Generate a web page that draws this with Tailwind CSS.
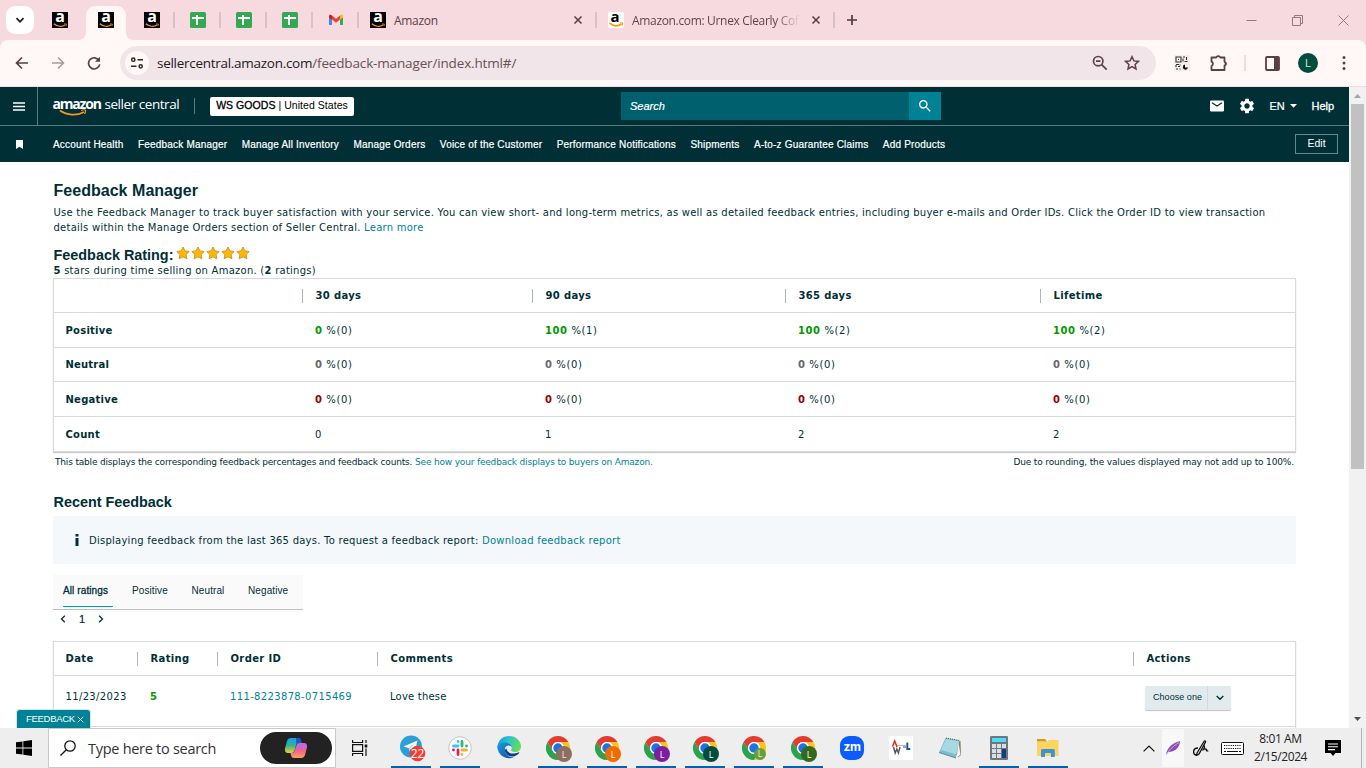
<!DOCTYPE html>
<html lang="en">
<head>
    <meta charset="UTF-8">
    <meta name="viewport" content="width=device-width, initial-scale=1.0">
    <title>Feedback Manager</title>
    <script src="https://cdn.jsdelivr.net/npm/@tailwindcss/browser@4"></script>
</head>
<body class="w-[1366px] h-[768px] overflow-hidden bg-white flex flex-col font-['Liberation_Sans',Arial,sans-serif] text-[#002f36]">

    <!-- Shared icons -->
    <svg class="hidden">
        <symbol id="fav-amazon" viewBox="0 0 16 16">
            <rect width="16" height="16" fill="#000"/>
            <text x="8" y="10.3" font-family="Open Sans, sans-serif" font-weight="700" font-size="16" fill="#fff" text-anchor="middle">a</text>
            <path d="M1.8 11.8C5 14.8 10 15 13 13" fill="none" stroke="#f7981d" stroke-width="1.2"/>
            <path d="M12 12h2.4l-.6 2.2" fill="none" stroke="#f7981d" stroke-width=".8"/>
        </symbol>
        <symbol id="fav-sheet" viewBox="0 0 16 16">
            <rect width="16" height="16" rx="1.6" fill="#34a853"/>
            <path d="M2 6h12M7 3v10" stroke="#fff" stroke-width="2" fill="none"/>
        </symbol>
        <symbol id="tab-close" viewBox="0 0 10 10">
            <path d="M1.5 1.5l7 7M8.5 1.5l-7 7" stroke="#5b4046" stroke-width="1.6"/>
        </symbol>
        <symbol id="chrome" viewBox="0 0 48 48">
            <path d="M24 12h20.8A24 24 0 0 0 3.2 12l10.4 18A12 12 0 0 1 24 12z" fill="#e33b2e"/>
            <path d="M24 12h20.8A24 24 0 0 1 24 48l10.4-18A12 12 0 0 0 24 12z" fill="#fcc31e"/>
            <path d="M3.2 12A24 24 0 0 0 24 48l10.4-18a12 12 0 0 1-20.8 0z" fill="#2ba24c"/>
            <circle cx="24" cy="24" r="12" fill="#fff"/>
            <circle cx="24" cy="24" r="9.4" fill="#1a73e8"/>
        </symbol>
        <symbol id="star" viewBox="0 0 14 14">
            <path d="M7 1l1.9 3.9 4.3.6-3.1 3 .8 4.3L7 10.8l-3.9 2 .8-4.3-3.1-3 4.3-.6z" fill="#ffb700" stroke="#d0962a" stroke-width="1" stroke-linejoin="round"/>
        </symbol>
    </svg>

    <!-- Tab strip -->
    <div class="h-10 shrink-0 bg-[#f6dadf] flex items-center text-[12px] text-[#5b4046] font-['Open_Sans','Noto_Sans',sans-serif]">
        <div class="w-[37px] pl-[6px] shrink-0">
            <div class="w-7 h-7 rounded-[9px] bg-white flex items-center justify-center">
                <svg class="w-[10px] h-[10px]" viewBox="0 0 10 10"><path d="M1.5 3.2L5 6.8l3.5-3.6" fill="none" stroke="#221a1c" stroke-width="1.8"/></svg>
            </div>
        </div>
        <div class="w-[46px] flex justify-center"><svg class="w-4 h-4"><use href="#fav-amazon"/></svg></div>
        <div class="w-[46px] h-10 relative flex items-center justify-center">
            <svg class="absolute top-0 left-[-5px] w-14 h-10" viewBox="0 0 56 40"><path d="M0 40c5 0 8-3 8-8V16c0-6 4-10 10-10h20c6 0 10 4 10 10v16c0 5 3 8 8 8z" fill="#fff8f6"/></svg>
            <svg class="w-4 h-4 relative"><use href="#fav-amazon"/></svg>
        </div>
        <div class="w-[46px] flex justify-center relative"><svg class="w-4 h-4"><use href="#fav-amazon"/></svg><i class="absolute right-0 w-[2px] h-4 bg-[#d6c1c4]"></i></div>
        <div class="w-[46px] flex justify-center relative"><svg class="w-4 h-4"><use href="#fav-sheet"/></svg><i class="absolute right-0 w-[2px] h-4 bg-[#d6c1c4]"></i></div>
        <div class="w-[46px] flex justify-center relative"><svg class="w-4 h-4"><use href="#fav-sheet"/></svg><i class="absolute right-0 w-[2px] h-4 bg-[#d6c1c4]"></i></div>
        <div class="w-[46px] flex justify-center relative"><svg class="w-4 h-4"><use href="#fav-sheet"/></svg><i class="absolute right-0 w-[2px] h-4 bg-[#d6c1c4]"></i></div>
        <div class="w-[46px] flex justify-center relative">
            <svg class="w-4 h-4" viewBox="0 0 16 16">
                <path d="M1 4v8.2c0 .6.4.9 1 .9h2V7z" fill="#4285f4"/>
                <path d="M15 4v8.2c0 .6-.4.9-1 .9h-2V7z" fill="#34a853"/>
                <path d="M4 3.6l4 3.2 4-3.2v4L8 10.8 4 7.6z" fill="#ea4335"/>
                <path d="M1 4.3C1 2.8 2.6 2.4 4 3.5v4.2L1 5.4z" fill="#c5221f"/>
                <path d="M15 4.3c0-1.5-1.6-1.9-3-.8v4.2l3-2.3z" fill="#fbbc04"/>
            </svg>
            <i class="absolute right-0 w-[2px] h-4 bg-[#d6c1c4]"></i>
        </div>
        <div class="w-[238px] pl-[11px] pr-[14px] flex items-center relative">
            <svg class="w-4 h-4 mr-2"><use href="#fav-amazon"/></svg>
            <span class="mt-px tracking-[-0.3px]">Amazon</span>
            <svg class="w-[10px] h-[10px] ml-auto"><use href="#tab-close"/></svg>
            <i class="absolute right-0 w-[2px] h-4 bg-[#d6c1c4]"></i>
        </div>
        <div class="w-[238px] pl-[11px] pr-[14px] flex items-center relative">
            <svg class="w-4 h-4 mr-2 shrink-0" viewBox="0 0 16 16">
                <rect width="16" height="16" rx="2" fill="#fff"/>
                <text x="7" y="9.5" font-family="Open Sans, sans-serif" font-weight="700" font-size="15" fill="#000" text-anchor="middle">a</text>
                <path d="M1.5 11C5 14.5 10 14.6 13.5 12" fill="none" stroke="#ff9900" stroke-width="1.7"/>
                <path d="M12 10.8h2.7l-.5 2.6" fill="none" stroke="#ff9900"/>
            </svg>
            <span class="mt-px w-[168px] whitespace-nowrap tracking-[-0.33px] bg-linear-to-r from-[#5b4046] from-85% to-[#f6dadf] bg-clip-text text-transparent">Amazon.com: Urnex Clearly Cof</span>
            <svg class="w-[10px] h-[10px] ml-auto"><use href="#tab-close"/></svg>
            <i class="absolute right-0 w-[2px] h-4 bg-[#d6c1c4]"></i>
        </div>
        <svg class="w-3 h-3 ml-[11px]" viewBox="0 0 12 12"><path d="M6 1v10M1 6h10" stroke="#4e3a3e" stroke-width="1.7"/></svg>
        <div class="ml-auto mr-[17px] flex gap-[35px]">
            <svg class="w-[11px] h-[11px]" viewBox="0 0 11 11"><path d="M.5 5.5h10" stroke="#8f7a7e"/></svg>
            <svg class="w-[11px] h-[11px]" viewBox="0 0 11 11"><path d="M.5 2.5h8v8h-8zM2.5 2.5v-2h8v8h-2" fill="none" stroke="#8f7a7e"/></svg>
            <svg class="w-[11px] h-[11px]" viewBox="0 0 11 11"><path d="M.5.5l10 10M10.5.5l-10 10" stroke="#8f7a7e"/></svg>
        </div>
    </div>

    <!-- Address bar -->
    <div class="h-[47px] shrink-0 bg-[#f6dadf] border-b border-[#f7dadf]">
        <div class="h-[46px] bg-[#fff8f6] rounded-t-lg flex items-center pl-[15px]">
            <svg class="w-[14px] h-[14px]" viewBox="0 0 14 14"><path d="M13 7H1.7M7 1.5L1.5 7 7 12.5" fill="none" stroke="#5b3f46" stroke-width="1.7"/></svg>
            <svg class="w-[14px] h-[14px] ml-[22px]" viewBox="0 0 14 14"><path d="M1 7h11.3M7 1.5L12.5 7 7 12.5" fill="none" stroke="#ab9a9d" stroke-width="1.6"/></svg>
            <svg class="w-[14px] h-[14px] ml-[22px]" viewBox="0 0 14 14"><path d="M12 4.500A5.600 5.600 0 1 0 12.700 8.300" fill="none" stroke="#5b3f46" stroke-width="1.7"/><path d="M13 .8v5H8z" fill="#5b3f46"/></svg>
            <div class="w-[1036px] h-[34px] ml-[19px] rounded-full bg-[#f1e5e9] flex items-center pl-[5px] pr-[16px]">
                <div class="w-6 h-6 rounded-full bg-[#fff8f6] flex items-center justify-center">
                    <svg class="w-[14px] h-[14px]" viewBox="0 0 14 14" fill="none" stroke="#32262a" stroke-width="1.5"><circle cx="3.3" cy="3.7" r="1.6"/><path d="M7.5 3.7H13M1 10.3h5.5"/><circle cx="10.7" cy="10.3" r="1.6"/></svg>
                </div>
                <span class="ml-2 text-[13.5px] tracking-[-0.15px] text-[#6b5055] font-['Open_Sans','Noto_Sans',sans-serif]"><span class="text-[#241a1c] tracking-[-0.28px]">sellercentral.amazon.com</span>/feedback-manager/index.html#/</span>
                <svg class="w-4 h-4 ml-auto" viewBox="0 0 16 16" fill="none" stroke="#5b4046" stroke-width="1.7"><circle cx="6.2" cy="6.2" r="4.7"/><path d="M9.7 9.7l5 5M4 6.200h4.400"/></svg>
                <svg class="w-4 h-4 ml-4" viewBox="0 0 16 16" fill="none" stroke="#5b4046" stroke-width="1.5"><path d="M8 1.7l1.900 4.200 4.600.5-3.400 3.100.9 4.500-4-2.300L4 14l.9-4.500L1.500 6.400l4.600-.5z"/></svg>
            </div>
            <svg class="w-4 h-4 ml-[18px]" viewBox="0 0 16 16"><rect width="16" height="16" fill="#f4efee"/><path d="M2 2h5v5H2zM4 4.500h1M9 2h2M12.500 2v3M9 3.500v3M10.500 6.500h3M2 9.500h3M2 10v2M4 11.500h2M2 14h2M6 9.500v1M6 13.500v1" fill="none" stroke="#333" stroke-width="1.1"/><path d="M11 9.500a2.600 2.600 0 1 0 3 3h-3z" fill="#111"/></svg>
            <svg class="w-5 h-5 ml-[19px]" viewBox="0 0 20 20"><path d="M2.500 4.500h4.700a2.200 2.200 0 0 1 4.100 0h4.200v4.300a2 2 0 0 1 0 3.900v4.300h-13v-4a2.400 2.400 0 0 0 0-4.400z" fill="none" stroke="#5b3f46" stroke-width="1.8" stroke-linejoin="round"/><path d="M7.500 3.800a2 2 0 0 1 3.600 0zM15.700 9.200a1.800 1.800 0 0 1 0 3z" fill="#5b3f46"/></svg>
            <i class="w-[2px] h-4 ml-[15px] bg-[#fbd3dc]"></i>
            <svg class="w-[15px] h-[15px] ml-[19px]" viewBox="0 0 15 15"><rect x="1" y="1" width="13" height="13" rx="1" fill="none" stroke="#5b3f46" stroke-width="1.8"/><path d="M9 1h5v13H9z" fill="#5b3f46"/></svg>
            <div class="w-5 h-5 ml-[18px] rounded-full bg-[#004d40] text-[#cfe0dd] text-[11px] flex items-center justify-center">L</div>
            <svg class="w-1 h-4 ml-[24px]" viewBox="0 0 4 16" fill="#5b3f46"><circle cx="2" cy="2.5" r="1.5"/><circle cx="2" cy="8" r="1.5"/><circle cx="2" cy="13.5" r="1.5"/></svg>
        </div>
    </div>

    <div class="h-[641px] shrink-0 flex relative">
        <div class="w-[1349px] flex flex-col overflow-hidden">
            <!-- Seller Central header -->
            <div class="h-[39px] shrink-0 bg-[#002f36] border-b border-[#5c787c] flex items-center text-white">
                <div class="w-[38px] h-full border-r border-[#5c787c] flex items-center pl-[13px]">
                    <svg class="w-3 h-[9px]" viewBox="0 0 12 9"><path d="M0 1h12M0 4.500h12M0 8h12" stroke="#fff" stroke-width="1.3"/></svg>
                </div>
                <div class="relative ml-[14.5px] w-[128px] h-[22px] flex items-baseline whitespace-nowrap font-['Open_Sans',sans-serif] text-[14px] leading-[18px]">
                    <span class="font-bold w-[49px] tracking-[-1.2px]">amazon</span>
                    <span class="ml-[3px] text-[13.5px] tracking-[-0.45px]">seller central</span>
                    <svg class="absolute left-[6px] top-[14px] w-[30px] h-[8px]" viewBox="0 0 30 8"><path d="M1 1.500c7 5 17 5.500 24 1.500" fill="none" stroke="#f7981d" stroke-width="1.6"/><path d="M22 1.500c2-.8 4-.8 4.500-.2s0 2-1 3.700" fill="none" stroke="#f7981d" stroke-width="1.2"/></svg>
                </div>
                <i class="w-px h-4 ml-[13.5px] bg-[#5c787c]"></i>
                <div class="ml-[15px] w-[144px] h-[19px] rounded-[2px] bg-white text-black text-[10.5px] tracking-[0.05px] flex items-center justify-center whitespace-pre"><span class="[-webkit-text-stroke:0.3px]">WS GOODS</span> | United States</div>
                <div class="ml-[267px] w-[320px] h-7 flex">
                    <div class="w-[288px] bg-[#00606e] pl-[9px] flex items-center text-[11px] italic [-webkit-text-stroke:0.2px]">Search</div>
                    <div class="w-8 bg-[#008296] flex items-center justify-center">
                        <svg class="w-4 h-4" viewBox="0 0 24 24" fill="#fff"><path d="M15.5 14h-.79l-.28-.27A6.471 6.471 0 0 0 16 9.5 6.5 6.5 0 1 0 9.5 16c1.61 0 3.09-.59 4.23-1.57l.27.28v.79l5 4.99L20.49 19l-4.99-5zm-6 0C7.01 14 5 11.99 5 9.5S7.01 5 9.5 5 14 7.01 14 9.5 11.99 14 9.5 14z"/></svg>
                    </div>
                </div>
                <svg class="w-[14px] h-3 ml-auto" viewBox="0 0 14 12"><rect y=".5" width="14" height="11" rx="1.2" fill="#fff"/><path d="M2 2.800L7 6l5-3.200" fill="none" stroke="#002f36" stroke-width="1.2"/></svg>
                <svg class="w-[18px] h-[18px] ml-[14px]" viewBox="0 0 24 24" fill="#fff"><path d="M19.14 12.94c.04-.3.06-.61.06-.94 0-.32-.02-.64-.07-.94l2.03-1.58c.18-.14.23-.41.12-.61l-1.92-3.32c-.12-.22-.37-.29-.59-.22l-2.39.96c-.5-.38-1.03-.7-1.62-.94l-.36-2.54c-.04-.24-.24-.41-.48-.41h-3.84c-.24 0-.43.17-.47.41l-.36 2.54c-.59.24-1.13.57-1.62.94l-2.39-.96c-.22-.08-.47 0-.59.22L2.74 8.87c-.12.21-.08.47.12.61l2.03 1.58c-.05.3-.09.63-.09.94s.02.64.07.94l-2.03 1.58c-.18.14-.23.41-.12.61l1.92 3.32c.12.22.37.29.59.22l2.39-.96c.5.38 1.03.7 1.62.94l.36 2.54c.05.24.24.41.48.41h3.84c.24 0 .44-.17.47-.41l.36-2.54c.59-.24 1.13-.56 1.62-.94l2.39.96c.22.08.47 0 .59-.22l1.92-3.32c.12-.22.07-.47-.12-.61l-2.01-1.58zM12 15.6c-1.98 0-3.6-1.62-3.6-3.6s1.62-3.6 3.6-3.6 3.6 1.62 3.6 3.6-1.62 3.6-3.6 3.6z"/></svg>
                <span class="ml-[14px] w-4 text-[11px] [-webkit-text-stroke:0.2px]">EN</span>
                <svg class="w-[7px] h-1 ml-[4px]" viewBox="0 0 7 4"><path d="M0 0h7L3.500 3.700z" fill="#fff"/></svg>
                <span class="ml-[15px] mr-[13.5px] w-6 text-[11px] [-webkit-text-stroke:0.3px]">Help</span>
            </div>
            <div class="h-9 shrink-0 bg-[#002f36] flex items-center text-white text-[10px]">
                <svg class="w-[7px] h-[9px] ml-4" viewBox="0 0 7 9"><path d="M0 0h7v9L3.500 6.800 0 9z" fill="#fff"/></svg>
                <div class="ml-[30px] mt-px flex gap-[14.5px] whitespace-nowrap tracking-[0.19px] [-webkit-text-stroke:0.2px]">
                    <span>Account Health</span>
                    <span>Feedback Manager</span>
                    <span>Manage All Inventory</span>
                    <span>Manage Orders</span>
                    <span>Voice of the Customer</span>
                    <span>Performance Notifications</span>
                    <span>Shipments</span>
                    <span>A-to-z Guarantee Claims</span>
                    <span>Add Products</span>
                </div>
                <div class="ml-auto mr-[11px] w-[43px] h-5 border border-[#6d868a] flex items-center justify-center text-[10.5px]">Edit</div>
            </div>

            <!-- Page content -->
            <main class="pl-[53px] w-[1296px] font-['DejaVu_Sans',Verdana,sans-serif] text-[10px] tracking-[0.25px]">
                <h1 class="mt-[20px] h-[18px] leading-[18px] pl-[0.5px] text-[16px] font-bold font-['Liberation_Sans',sans-serif]"><span class="tracking-[0.03px]">Feedback Manager</span></h1>
                <p class="mt-[5px] pl-[0.5px] leading-[15px] whitespace-nowrap">Use the Feedback Manager to track buyer satisfaction with your service. You can view short- and long-term metrics, as well as detailed feedback entries, including buyer e-mails and Order IDs. Click the Order ID to view transaction<br>details within the Manage Orders section of Seller Central. <a class="text-[#008296]">Learn more</a></p>
                <div class="mt-[11px] pl-[0.5px] h-[17px] flex">
                    <h2 class="w-[122px] leading-[18px] text-[14.4px] font-bold tracking-normal whitespace-nowrap font-['Liberation_Sans',sans-serif]">Feedback Rating:</h2>
                    <div class="flex gap-[1.2px]">
                        <svg class="w-[14px] h-[14px]"><use href="#star"/></svg>
                        <svg class="w-[14px] h-[14px]"><use href="#star"/></svg>
                        <svg class="w-[14px] h-[14px]"><use href="#star"/></svg>
                        <svg class="w-[14px] h-[14px]"><use href="#star"/></svg>
                        <svg class="w-[14px] h-[14px]"><use href="#star"/></svg>
                    </div>
                </div>
                <p class="h-[15px] leading-[15px] pl-[0.5px]"><b>5</b> stars during time selling on Amazon. (<b>2</b> ratings)</p>

                <div class="h-[174px] border border-[#d5dbdb] shadow-[0_1px_1px_0_rgba(0,0,0,0.2)] grid grid-rows-[34px_35px_34px_35px_34px] divide-y divide-[#d5dbdb] tracking-[0.35px]">
                    <div class="grid grid-cols-[249px_230px_253px_255px_1fr] items-center font-bold">
                        <span class="h-[14px] border-r border-[#aab7b8]"></span>
                        <span class="h-[14px] pl-[12.5px] leading-[14px] border-r border-[#aab7b8]">30 days</span>
                        <span class="h-[14px] pl-[12.5px] leading-[14px] border-r border-[#aab7b8]">90 days</span>
                        <span class="h-[14px] pl-[12.5px] leading-[14px] border-r border-[#aab7b8]">365 days</span>
                        <span class="h-[14px] pl-[12.5px] leading-[14px]">Lifetime</span>
                    </div>
                    <div class="grid grid-cols-[249px_230px_253px_255px_1fr] items-center tracking-[0.6px]">
                        <b class="pl-[11.5px] tracking-[0.25px]">Positive</b>
                        <span class="pl-3"><b class="text-[#090]">0</b> %(0)</span>
                        <span class="pl-3"><b class="text-[#090]">100</b> %(1)</span>
                        <span class="pl-3"><b class="text-[#090]">100</b> %(2)</span>
                        <span class="pl-3"><b class="text-[#090]">100</b> %(2)</span>
                    </div>
                    <div class="grid grid-cols-[249px_230px_253px_255px_1fr] items-center tracking-[0.6px]">
                        <b class="pl-[11.5px] tracking-[0.2px]">Neutral</b>
                        <span class="pl-3"><b class="text-[#666]">0</b> %(0)</span>
                        <span class="pl-3"><b class="text-[#666]">0</b> %(0)</span>
                        <span class="pl-3"><b class="text-[#666]">0</b> %(0)</span>
                        <span class="pl-3"><b class="text-[#666]">0</b> %(0)</span>
                    </div>
                    <div class="grid grid-cols-[249px_230px_253px_255px_1fr] items-center tracking-[0.6px]">
                        <b class="pl-[11.5px] tracking-[0.25px]">Negative</b>
                        <span class="pl-3"><b class="text-[#900]">0</b> %(0)</span>
                        <span class="pl-3"><b class="text-[#900]">0</b> %(0)</span>
                        <span class="pl-3"><b class="text-[#900]">0</b> %(0)</span>
                        <span class="pl-3"><b class="text-[#900]">0</b> %(0)</span>
                    </div>
                    <div class="grid grid-cols-[249px_230px_253px_255px_1fr] items-center">
                        <b class="pl-[11.5px] tracking-[0.25px]">Count</b>
                        <span class="pl-3">0</span>
                        <span class="pl-3">1</span>
                        <span class="pl-3">2</span>
                        <span class="pl-3">2</span>
                    </div>
                </div>
                <div class="h-[21px] pt-px px-[2px] flex items-center justify-between text-[9px] tracking-[-0.175px]">
                    <span>This table displays the corresponding feedback percentages and feedback counts. <a class="text-[#008296]">See how your feedback displays to buyers on Amazon.</a></span>
                    <span class="tracking-[-0.14px]">Due to rounding, the values displayed may not add up to 100%.</span>
                </div>

                <h2 class="mt-[20px] h-[18px] leading-[18px] pl-[0.5px] text-[14.4px] font-bold tracking-normal font-['Liberation_Sans',sans-serif]">Recent Feedback</h2>
                <div class="mt-[5px] h-12 bg-[#f4f8fa] flex items-center">
                    <svg class="w-1 h-3 ml-[22px] mr-[10px]" viewBox="0 0 4 12" fill="#002f36"><path d="M.5 0h3v2.500h-3zM.5 4h3v8h-3z"/></svg>
                    <span>Displaying feedback from the last 365 days. To request a feedback report: <a class="text-[#008296]">Download feedback report</a></span>
                </div>

                <div class="mt-[11px] w-[250px] h-[35px] bg-[#fafafa] border-b border-[#bbc0c1] pl-[10px] flex text-[10px] leading-[32px] tracking-[0.1px] font-['Liberation_Sans',sans-serif]">
                    <span class="w-[50px] h-8 border-b border-[#00a3b4] tracking-[0.1px] whitespace-nowrap [-webkit-text-stroke:0.3px]">All ratings</span>
                    <span class="ml-[19px] w-[59.5px]">Positive</span>
                    <span class="w-[56.5px]">Neutral</span>
                    <span>Negative</span>
                </div>
                <div class="h-[18px] pl-[7px] flex items-center font-['Liberation_Sans',sans-serif]">
                    <svg class="w-[6px] h-2" viewBox="0 0 6 8"><path d="M4.800.7L1.500 4l3.300 3.300" fill="none" stroke="#002f36" stroke-width="1.3"/></svg>
                    <span class="ml-[13px] text-[11px] [-webkit-text-stroke:0.2px]">1</span>
                    <svg class="w-[6px] h-2 ml-[13px]" viewBox="0 0 6 8"><path d="M1.200.7L4.500 4 1.200 7.300" fill="none" stroke="#002f36" stroke-width="1.3"/></svg>
                </div>

                <div class="mt-[13px] h-[120px] border border-[#d5dbdb] shadow-[0_1px_1px_0_rgba(0,0,0,0.2)] grid grid-rows-[34px_51px_1fr] divide-y divide-[#d5dbdb] tracking-[0.35px]">
                    <div class="grid grid-cols-[84px_80px_160px_756px_1fr] items-center font-bold">
                        <span class="h-[14px] pl-[11.5px] leading-[14px] border-r border-[#aab7b8]">Date</span>
                        <span class="h-[14px] pl-[12.5px] leading-[14px] border-r border-[#aab7b8]">Rating</span>
                        <span class="h-[14px] pl-[12.5px] leading-[14px] border-r border-[#aab7b8]">Order ID</span>
                        <span class="h-[14px] pl-[12.5px] leading-[14px] border-r border-[#aab7b8]">Comments</span>
                        <span class="h-[14px] pl-[12.5px] leading-[14px]">Actions</span>
                    </div>
                    <div class="grid grid-cols-[84px_80px_160px_756px_1fr] items-center whitespace-nowrap">
                        <span class="pl-[11.5px] pb-[9px]">11/23/2023</span>
                        <b class="pl-3 pb-[9px] text-[#090]">5</b>
                        <a class="pl-3 pb-[9px] text-[#008296]">111-8223878-0715469</a>
                        <span class="pl-3 pb-[9px] tracking-[0.2px]">Love these</span>
                        <span class="pl-[11px] pb-[6px]">
                            <span class="w-[86px] h-6 flex rounded-[2px] bg-[#e1ebed] shadow-[0_1px_1px_rgba(0,0,0,0.25)] text-[9px] tracking-[0.05px] leading-[23px] font-['Liberation_Sans',sans-serif]">
                                <span class="w-[63px] pl-2 border-r border-[#cfdbdd]">Choose one</span>
                                <span class="flex-1 flex items-center justify-center"><svg class="w-2 h-[6px]" viewBox="0 0 8 6"><path d="M.7 1L4 4.300 7.300 1" fill="none" stroke="#002f36" stroke-width="1.4"/></svg></span>
                            </span>
                        </span>
                    </div>
                    <div></div>
                </div>
            </main>
        </div>

        <!-- Scrollbar -->
        <div class="w-[17px] bg-[#f1f1f1] flex flex-col items-center justify-between pt-[7px] pb-[7px]">
            <svg class="w-[7px] h-1" viewBox="0 0 7 4"><path d="M3.500 0L7 4H0z" fill="#a3a3a3"/></svg>
            <div class="w-[13px] h-[365px] mt-[6px] bg-[#c1c1c1]"></div>
            <svg class="w-[7px] h-1 mt-auto" viewBox="0 0 7 4"><path d="M0 0h7L3.500 4z" fill="#505050"/></svg>
        </div>

        <!-- Floating feedback button -->
        <div class="absolute left-4 bottom-0 w-[75px] h-[19px] rounded-t-[4px] border border-b-0 border-[#d5e5e8] bg-[#008296] text-white text-[9.5px] flex items-center pl-[9px] whitespace-nowrap">
            <span class="w-12 tracking-[-0.3px]">FEEDBACK</span>
            <svg class="w-[7px] h-[7px] ml-[3px]" viewBox="0 0 7 7"><path d="M.7.7l5.600 5.600M6.300.7L.7 6.300" stroke="#fff" stroke-width=".9"/></svg>
        </div>
    </div>

    <!-- Taskbar -->
    <div class="h-10 shrink-0 bg-[#eeeeee] flex items-center text-black font-['Open_Sans','Noto_Sans',sans-serif]">
        <svg class="w-4 h-4 ml-4" viewBox="0 0 16 16"><path d="M0 2.300l6.500-.9v6.200H0zM7.300 1.300L16 0v7.600H7.300zM0 8.400h6.500v6.200L0 13.700zM7.300 8.400H16V16l-8.700-1.300z"/></svg>
        <div class="ml-4 w-[288px] h-10 bg-white border border-[#c9c9c9] flex items-center pl-[11px]">
            <svg class="w-4 h-4" viewBox="0 0 16 16" fill="none" stroke="#111" stroke-width="1.3"><circle cx="10" cy="6" r="5.2"/><path d="M6.300 9.700L.5 15.500"/></svg>
            <span class="ml-3 mt-px w-[172px] text-[14.5px] tracking-[-0.28px] text-[#333]">Type here to search</span>
            <div class="w-[72px] h-8 rounded-full bg-[#222] flex items-center justify-center">
                <svg class="w-6 h-[22px]" viewBox="0 0 24 22">
                    <defs>
                        <linearGradient id="cpa" x1="0" y1="0" x2="0" y2="1"><stop offset="0" stop-color="#1b9df0"/><stop offset=".5" stop-color="#30b58f"/><stop offset="1" stop-color="#f3d02f"/></linearGradient>
                        <linearGradient id="cpb" x1="0" y1="0" x2="0" y2="1"><stop offset="0" stop-color="#b26af5"/><stop offset=".5" stop-color="#ee6296"/><stop offset="1" stop-color="#ffa25a"/></linearGradient>
                    </defs>
                    <path d="M7 1h7c2 0 2.500 1 3 3l.6 2h-3C13 6 12.300 7 11.800 9l-1.200 4c-.6 2-1.400 3-3.200 3H4c-2.500 0-3.500-2-3-4.500L3 4c.7-2 1.800-3 4-3z" fill="url(#cpa)"/>
                    <path d="M12 1h2c2 0 2.500 1 3 3l.6 2h-3c-1 0-1.700.5-2.200 1.500z" fill="#1658c8"/>
                    <path d="M17 21h-7c-2 0-2.500-1-3-3l-.6-2h1.500c1.700 0 2.300-1 2.800-3l1.500-4c.6-2 1.400-3 3.200-3H20c2.500 0 3.500 2 3 4.500L21 18c-.7 2-1.800 3-4 3z" fill="url(#cpb)"/>
                </svg>
            </div>
        </div>
        <svg class="w-4 h-4 ml-4" viewBox="0 0 16 16" fill="none" stroke="#111" stroke-width="1.2"><path d="M.6 0v2.500h10V0M.6 4.600h10v6.800h-10zM.6 16v-2.500h10V16M14 0v3M14 8.500V16"/><path d="M14 4.500v3" stroke-width="2.6"/></svg>

        <div class="ml-[18.5px] flex h-10">
            <div class="w-[49px] flex items-center justify-center relative">
                <svg class="w-7 h-7 ml-[3px]" viewBox="0 0 28 28"><circle cx="12" cy="12.500" r="11" fill="#2a9fd8"/><path d="M4.500 12.500l14-6-2.800 11.500-4.500-3.400z" fill="#fff"/><path d="M9.500 14l6.500-5.300-4.600 6-.5 3z" fill="#b9d9ea"/><circle cx="18.500" cy="19.500" r="7.800" fill="#f23c34"/><text x="18.500" y="24" font-size="12" fill="#fff" text-anchor="middle" font-family="Open Sans, sans-serif">22</text></svg>
                <i class="absolute bottom-0 w-10 h-[2px] bg-[#0063b1]"></i>
            </div>
            <div class="w-[49px] flex items-center justify-center relative">
                <svg class="w-6 h-6" viewBox="0 0 24 24"><circle cx="12" cy="12" r="11.3" fill="#fff" stroke="#c4c4c4"/><g stroke-width="2.8" stroke-linecap="round"><path d="M5.500 10h4.500M10 5.300v.2" stroke="#36c5f0"/><path d="M14 5.500V10M18.600 10h-.1" stroke="#2eb67d"/><path d="M14 14h4.500M14 18.600v-.1" stroke="#ecb22e"/><path d="M10 14v4.500M5.400 14h.1" stroke="#e01e5a"/></g></svg>
                <i class="absolute bottom-0 w-10 h-[2px] bg-[#0063b1]"></i>
            </div>
            <div class="w-[49px] flex items-center justify-center">
                <svg class="w-6 h-6" viewBox="0 0 24 24">
                    <defs>
                        <linearGradient id="ea" x1="0" y1="0" x2="1" y2=".3"><stop offset="0" stop-color="#1b8fdc"/><stop offset=".5" stop-color="#2bc3d2"/><stop offset="1" stop-color="#63dc5b"/></linearGradient>
                        <linearGradient id="eb" x1="0" y1="0" x2="1" y2="1"><stop offset="0" stop-color="#1b9de2"/><stop offset="1" stop-color="#0c4a9e"/></linearGradient>
                    </defs>
                    <path d="M.3 10.500C1.500 4 6 0 12 0c7 0 12 5 12 10.500 0 3.500-2.700 5.500-6 5.500-2.700 0-4-1-4-2 0-.8.8-1 .8-2.600C14.800 9 12.500 7 9 7 4.500 7 1.500 9 .3 10.500z" fill="url(#ea)"/>
                    <path d="M.2 10.500C1.500 8 4.500 6.500 8 6.500c4 0 6.800 2.300 6.800 5-.5-1.300-1.800-2.200-3.500-2-2.600.3-3.800 2.500-3.300 5.500.7 4 5 7.300 9.500 6A12 12 0 0 1 .2 10.500z" fill="url(#eb)"/>
                    <path d="M8 15c.7 4 5 6.500 9.500 5.200 2-.7 3.700-1.800 4.700-3.200.4-.6-.1-.8-.6-.6C15.500 19 10 17 9.400 12.500 8.300 13 7.800 14 8 15z" fill="#0a3f87"/>
                </svg>
            </div>
            <div class="w-[49px] flex items-center justify-center relative">
                <svg class="w-[26px] h-[26px] ml-[2px] mt-[2px]" viewBox="0 0 26 26"><use href="#chrome" width="24" height="24"/><circle cx="18" cy="18" r="8" fill="#8d6e63"/><text x="18" y="21.500" font-size="9" fill="#f0e8e5" text-anchor="middle" font-family="Open Sans, sans-serif">L</text></svg>
                <i class="absolute bottom-0 w-10 h-[2px] bg-[#0063b1]"></i>
            </div>
            <div class="w-[49px] flex items-center justify-center relative">
                <svg class="w-[26px] h-[26px] ml-[2px] mt-[2px]" viewBox="0 0 26 26"><use href="#chrome" width="24" height="24"/><circle cx="18" cy="18" r="8" fill="#ef6c00"/><text x="18" y="21.500" font-size="9" fill="#fff" text-anchor="middle" font-family="Open Sans, sans-serif">L</text></svg>
                <i class="absolute bottom-0 w-10 h-[2px] bg-[#0063b1]"></i>
            </div>
            <div class="w-[49px] flex items-center justify-center relative">
                <svg class="w-[26px] h-[26px] ml-[2px] mt-[2px]" viewBox="0 0 26 26"><use href="#chrome" width="24" height="24"/><circle cx="18" cy="18" r="8" fill="#7b1fa2"/><text x="18" y="21.500" font-size="9" fill="#fff" text-anchor="middle" font-family="Open Sans, sans-serif">L</text></svg>
                <i class="absolute bottom-0 w-10 h-[2px] bg-[#0063b1]"></i>
            </div>
            <div class="w-[49px] flex items-center justify-center relative">
                <svg class="w-[26px] h-[26px] ml-[2px] mt-[2px]" viewBox="0 0 26 26"><use href="#chrome" width="24" height="24"/><circle cx="18" cy="18" r="8" fill="#004d40"/><text x="18" y="21.500" font-size="9" fill="#fff" text-anchor="middle" font-family="Open Sans, sans-serif">L</text></svg>
                <i class="absolute bottom-0 w-10 h-[2px] bg-[#0063b1]"></i>
            </div>
            <div class="w-[49px] flex items-center justify-center relative">
                <svg class="w-[26px] h-[26px] ml-[2px] mt-[2px]" viewBox="0 0 26 26"><use href="#chrome" width="24" height="24"/><circle cx="18" cy="18" r="6" fill="#689f38"/><text x="18" y="21.300" font-size="8.5" fill="#e8f2dd" text-anchor="middle" font-family="Open Sans, sans-serif">L</text></svg>
                <i class="absolute bottom-0 w-10 h-[2px] bg-[#0063b1]"></i>
            </div>
            <div class="w-[49px] flex items-center justify-center relative">
                <svg class="w-[26px] h-[26px] ml-[2px] mt-[2px]" viewBox="0 0 26 26"><use href="#chrome" width="24" height="24"/><circle cx="18" cy="18" r="8" fill="#33691e"/><text x="18" y="21.500" font-size="9" fill="#fff" text-anchor="middle" font-family="Open Sans, sans-serif">L</text></svg>
                <i class="absolute bottom-0 w-10 h-[2px] bg-[#0063b1]"></i>
            </div>
            <div class="w-[49px] flex items-center justify-center">
                <div class="w-6 h-6 rounded-[9px] bg-[#0b5cff] text-white text-[12px] leading-none font-bold flex items-center justify-center pb-[2px] tracking-[-0.3px] font-['Inter',sans-serif]">zm</div>
            </div>
            <div class="w-[49px] flex items-center justify-center">
                <svg class="w-6 h-6" viewBox="0 0 24 24"><rect width="24" height="24" fill="#fff"/><path d="M3.500 10.500L5.700 5 8 11" fill="none" stroke="#e2231a" stroke-width="1.5"/><path d="M4.500 11l1.700 6 1.600-4 1.600 4L11 11" fill="none" stroke="#555" stroke-width="1.4"/><path d="M8 9.500h9" stroke="#f08080" stroke-width=".7"/><path d="M18.300 6.500v6.500h3" fill="none" stroke="#1c4f9c" stroke-width="1.9"/><path d="M14 11h3" stroke="#1c4f9c"/></svg>
            </div>
            <div class="w-[49px] flex items-center justify-center">
                <svg class="w-6 h-6" viewBox="0 0 24 24"><path d="M8 2.500L22.500 5 23 19l-3 2.500z" fill="#8a8163"/><path d="M7.500 2L21.500 4.500 18 22 1 16.500z" fill="#7dbccb"/><path d="M8 3l13 2.300-3 13L3 14z" fill="#a6d9e2"/><path d="M20.500 7l2 11.500-4 3.500z" fill="#f2f4f3"/><path d="M1 16.500L18 22" stroke="#5a8f9b"/><path d="M8 2l13.500 2.500" stroke="#555" stroke-dasharray="1 1"/></svg>
            </div>
            <div class="w-[49px] flex items-center justify-center relative">
                <svg class="w-6 h-6" viewBox="0 0 24 24"><rect x="3" width="18" height="24" rx="1.2" fill="#6e767e"/><rect x="5" y="2" width="14" height="4" fill="#4ddcf7"/><path d="M5 8h4v4H5zM10 8h4v4h-4zM15 8h4v4h-4zM5 13h4v4H5zM10 13h4v4h-4zM5 18h4v4H5zM10 18h4v4h-4z" fill="#dcdfe1"/><path d="M15 13h4v9h-4z" fill="#0e3f86"/></svg>
                <i class="absolute bottom-0 w-10 h-[2px] bg-[#0063b1]"></i>
            </div>
            <div class="w-[49px] flex items-center justify-center relative">
                <svg class="w-6 h-6" viewBox="0 0 24 24"><path d="M1 3h8l2 2.500H1z" fill="#d29a14"/><path d="M1 6h10l2-2h9.500v16H1z" fill="#fcd45e"/><path d="M5 21v-6.500c0-1 .7-1.500 1.500-1.500h10.800c.9 0 1.500.5 1.500 1.500V21h-4v-4H9v4z" fill="#3a92dd"/><path d="M9 17h5.800v3H9z" fill="#fcd45e"/></svg>
                <i class="absolute bottom-0 w-10 h-[2px] bg-[#0063b1]"></i>
            </div>
        </div>

        <div class="ml-auto flex items-center h-10">
            <svg class="w-3 h-[7px]" viewBox="0 0 12 7"><path d="M.6 6.400L6 1l5.400 5.400" fill="none" stroke="#111" stroke-width="1.2"/></svg>
            <div class="ml-[7px] w-[22px] h-[38px] bg-[#f8f8f8] flex items-center justify-center">
                <svg class="w-4 h-4" viewBox="0 0 16 16"><path d="M1 14.500C2 8 7 3 15 1c0 5-3 9-8 10.500l-3.500.5z" fill="#8e4cb8"/><path d="M1 15C4 10 8 6 14 2.500" stroke="#d9b8ee" stroke-width=".8" fill="none"/></svg>
            </div>
            <svg class="w-4 h-4 ml-[9px]" viewBox="0 0 16 16" fill="none" stroke="#111" stroke-width="1.3"><path d="M6 13L13 1.500c.8-1.200 2-.4 1.400.7L8 14l-2.500 1.500z" transform="translate(-2)"/><path d="M5 8C2 8 .6 10 .6 12s1.400 3 2.900 3M10 5.500c2.500.5 1.500 3-.5 5M11.500 9.500c1-.8 2.300-.6 2 .5s.5 1 1.800.8"/></svg>
            <svg class="w-[23px] h-[13px] ml-3" viewBox="0 0 23 13"><rect x=".5" y=".5" width="22" height="12" rx="1" fill="#fff" stroke="#111"/><path d="M3 3.500h17M3 6.500h17" stroke="#111" stroke-width="1.2" stroke-dasharray="1.2 1"/><path d="M3 9.500h2M6 9.500h11M18 9.500h2" stroke="#111" stroke-width="1.2"/></svg>
            <div class="ml-[7.5px] w-[58px] text-center text-[12px] leading-[18px] tracking-[-0.42px] text-[#222]">8:01 AM<br>2/15/2024</div>
            <svg class="w-4 h-4 ml-[15.5px]" viewBox="0 0 16 16"><path d="M0 0h16v13h-5.500L8 16l-2.500-3H0z" fill="#000"/><path d="M3 4h10M3 6.800h10M3 9.600h7" stroke="#fff" stroke-width="1.1"/></svg>
            <i class="ml-[20px] mr-[4px] w-px h-10 bg-[#b5b5b5]"></i>
        </div>
    </div>
</body>
</html>
